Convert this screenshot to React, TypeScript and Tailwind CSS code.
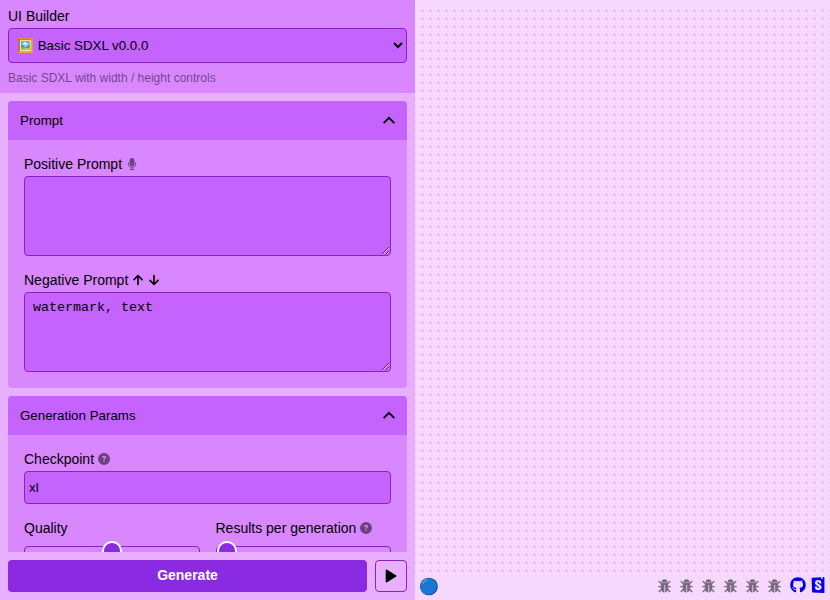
import React from 'react';
import { FaGithub } from 'react-icons/fa';
import { FaCircleQuestion } from 'react-icons/fa6';
import { SiStorybook } from 'react-icons/si';

const field = 'block w-full rounded border border-[#8e1ebe] bg-[#c563ff]';

function Bug() {
  return (
    <svg className="h-[14px] w-[13px] opacity-50" viewBox="0 0 13 14">
      <path d="M3.6 3.2 a2.9 2.9 0 0 1 5.8 0 Z" />
      <path d="M2.8 3.4 H10.2 V9.6 a3.7 3.9 0 0 1 -3 3.8 V6 H6 V13.4 a3.7 3.9 0 0 1 -3.2 -3.8 Z" />
      <path d="M6 6 H7.2 V13.4 H6 Z" fillOpacity="0.4" />
      <path
        d="M3.4 4.6 L1.2 2.5 M9.6 4.6 L11.8 2.5 M3 7.6 H0.7 M10 7.6 H12.3 M3.4 10.4 L1.2 12.6 M9.6 10.4 L11.8 12.6"
        fill="none"
        stroke="black"
        strokeWidth="1.4"
        strokeLinecap="round"
      />
    </svg>
  );
}

function Mic() {
  return (
    <svg className="h-3 w-3 opacity-50" viewBox="0 0 12 12">
      <rect x="3.6" y="0" width="4.8" height="8.2" rx="2.4" />
      <path
        d="M2.4 4.8 V5.8 a3.6 3.6 0 0 0 7.2 0 V4.8 M6 9.4 V11.4 M4.2 11.4 H7.8"
        fill="none"
        stroke="black"
        strokeWidth="1"
        strokeLinecap="round"
      />
    </svg>
  );
}

function Arrow({ down }: { down?: boolean }) {
  return (
    <svg
      className={down ? 'h-3 w-3 rotate-180' : 'h-3 w-3'}
      viewBox="0 0 12 12"
      fill="none"
      stroke="black"
      strokeWidth="1.6"
      strokeLinecap="round"
      strokeLinejoin="round"
    >
      <path d="M6 10.5 V1.6 M2 5.6 L6 1.6 L10 5.6" />
    </svg>
  );
}

function Panel({ title, children }: { title: string; children: React.ReactNode }) {
  return (
    <section className="shrink-0 overflow-hidden rounded bg-[#d987ff]">
      <header className="flex h-[39px] items-center justify-between bg-[#c563ff] px-3 text-[13.333px]">
        <span>{title}</span>
        <svg className="h-3 w-3" viewBox="0 0 12 12" fill="none" stroke="black" strokeWidth="1.9">
          <path d="M0.6 8.2 L6 2.8 L11.4 8.2" />
        </svg>
      </header>
      <div className="p-4">{children}</div>
    </section>
  );
}

function Slider({ label, hint, thumb }: { label: string; hint?: boolean; thumb: string }) {
  return (
    <div>
      <div className="flex h-4 items-center gap-1">
        {label}
        {hint && <FaCircleQuestion size={12} className="opacity-50" />}
      </div>
      <div className="relative mt-[10px] h-3 rounded border border-[#8e1ebe]">
        <div className={'absolute -top-[6px] h-5 w-5 rounded-full border-2 border-white bg-[#8a2be2] ' + thumb} />
      </div>
    </div>
  );
}

export default function App() {
  return (
    <div className="flex h-[600px] w-[830px] overflow-hidden bg-[#f6d8ff] font-['Liberation_Sans',Arial,sans-serif] text-[14px] leading-4 text-black">
      <aside className="flex w-[415px] shrink-0 flex-col bg-[#e8afff]">
        <div className="h-[93px] shrink-0 bg-[#d987ff] px-2 pt-2">
          <label className="block h-5">UI Builder</label>
          <select className={field + ' h-[35px] px-1 text-[13.333px]'}>
            <option>🖼️ Basic SDXL v0.0.0</option>
          </select>
          <p className="mt-[7px] text-[12px] text-black/50">Basic SDXL with width / height controls</p>
        </div>
        <main className="flex min-h-0 flex-1 flex-col gap-2 overflow-hidden px-2 pt-2">
          <Panel title="Prompt">
            <div className="mb-1 flex h-4 items-center gap-1">
              Positive Prompt <Mic />
            </div>
            <textarea className={field + ' h-20 resize p-2'} />
            <div className="mt-4 mb-1 flex h-4 items-center gap-1">
              Negative Prompt <Arrow />
              <Arrow down />
            </div>
            <textarea
              className={field + " h-20 resize px-2 py-[7px] font-['Liberation_Mono',monospace] text-[13.333px] leading-[15px]"}
              defaultValue="watermark, text"
            />
          </Panel>
          <Panel title="Generation Params">
            <div className="mb-1 flex h-4 items-center gap-1">
              Checkpoint <FaCircleQuestion size={12} className="opacity-50" />
            </div>
            <input className={field + ' h-[33px] px-1 text-[13.333px]'} defaultValue="xl" />
            <div className="mt-4 grid h-20 grid-cols-2 gap-4">
              <Slider label="Quality" thumb="left-[77px]" />
              <Slider label="Results per generation" hint thumb="left-0" />
            </div>
          </Panel>
        </main>
        <footer className="flex h-12 shrink-0 gap-2 p-2">
          <button className="flex-1 rounded bg-[#8a2be2] pb-0.5 font-bold text-white">Generate</button>
          <button className="flex w-8 items-center justify-center rounded border border-[#8e1ebe]">
            <svg className="h-[14px] w-[12px]" viewBox="0 0 12 14">
              <path d="M1.6 1.4 L10.5 7 L1.6 12.6 Z" stroke="black" strokeWidth="1.8" strokeLinejoin="round" />
            </svg>
          </button>
        </footer>
      </aside>
      <section className="flex min-w-0 flex-1 flex-col pt-[6px]">
        <div className="h-[568px] shrink-0 bg-[radial-gradient(circle_at_4.5px_4.5px,#e0a0ff_0px,transparent_1.8px)] bg-[length:8px_8px] bg-[position:3px_0px]" />
        <footer className="flex flex-1 items-center pl-1 pr-1">
          <span className="text-[16px]">🔵</span>
          <div className="ml-auto flex h-4 gap-1 mb-[4px]">
            <div className="mr-[5px] flex gap-[9px] pt-[2px]">
              {[0, 1, 2, 3, 4, 5].map((n) => (
                <Bug key={n} />
              ))}
            </div>
            <FaGithub size={16} className="text-[#0000ee]" />
            <SiStorybook size={16} className="text-[#0000ee]" />
          </div>
        </footer>
      </section>
    </div>
  );
}
